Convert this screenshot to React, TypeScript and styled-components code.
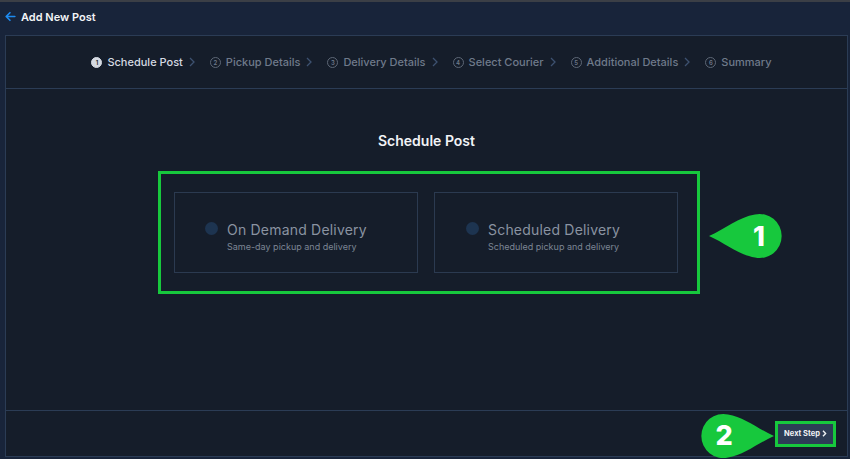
import React from "react";
import styled, { createGlobalStyle } from "styled-components";

const GlobalStyle = createGlobalStyle`
  html, body {
    margin: 0;
    padding: 0;
    background: #18243a;
  }
  body {
    font-family: Inter, "Noto Sans", sans-serif;
  }
`;

const Page = styled.div`
  height: 459px;
  display: flex;
  flex-direction: column;
  background: #18243a;
  overflow: hidden;
`;

const TopStrip = styled.div`
  height: 2px;
  background: #3b3f46;
`;

const Header = styled.div`
  height: 33px;
  box-sizing: border-box;
  padding: 0 0 4px 4px;
  display: flex;
  align-items: center;
  gap: 4px;
  color: #f2f4f7;
  font-size: 11px;
  font-weight: 600;
`;

const Panel = styled.div`
  flex: 1;
  margin: 0 2px 2px 5px;
  display: flex;
  flex-direction: column;
  background: #151d2a;
  border: 1px solid #2b3c55;
`;

const Stepper = styled.div`
  height: 52px;
  display: flex;
  align-items: center;
  justify-content: center;
  padding-left: 10px;
  border-bottom: 1px solid #2b3c55;
`;

const Step = styled.div<{ $active?: boolean }>`
  display: flex;
  align-items: center;
  gap: 5px;
  font-size: 11px;
  font-weight: 500;
  color: ${(p) => (p.$active ? "#d5dae2" : "#6f7a8a")};
`;

const StepNum = styled.span<{ $active?: boolean }>`
  width: 11px;
  height: 11px;
  border-radius: 50%;
  box-sizing: border-box;
  display: flex;
  align-items: center;
  justify-content: center;
  font-size: 6px;
  font-weight: 600;
  border: 1px solid ${(p) => (p.$active ? "#d5dae2" : "#5d6776")};
  background: ${(p) => (p.$active ? "#d5dae2" : "transparent")};
  color: ${(p) => (p.$active ? "#151d2a" : "#6f7a8a")};
`;

const Chevron = styled.span`
  display: flex;
  margin: 0 15px 0 6px;
  color: #3d5170;
`;

const Body = styled.div`
  flex: 1;
  display: flex;
  flex-direction: column;
  align-items: center;
  padding-top: 43px;
`;

const Title = styled.h2`
  margin: 0 0 22px;
  color: #f1f3f6;
  font-size: 14px;
  font-weight: 600;
  line-height: 17px;
`;

const Highlight = styled.div`
  position: relative;
  display: flex;
  gap: 16px;
  padding: 18px 19px 18px 13px;
  border: 3px solid #17c83d;
  margin-left: 5px;
`;

const Card = styled.div<{ $pad: number }>`
  width: 244px;
  height: 81px;
  box-sizing: border-box;
  border: 1px solid #2b3a50;
  display: flex;
  align-items: center;
  gap: 9px;
  padding: 7px 0 0 ${(p) => p.$pad}px;
`;

const Radio = styled.span`
  width: 13px;
  height: 13px;
  border-radius: 50%;
  background: #1d3450;
  flex-shrink: 0;
  margin-top: -15px;
`;

const CardText = styled.div`
  display: flex;
  flex-direction: column;
  gap: 3px;
`;

const CardTitle = styled.div`
  color: #8a93a1;
  font-size: 14px;
  font-weight: 400;
  line-height: 17px;
  letter-spacing: 0.2px;
`;

const CardSub = styled.div`
  color: #7c8594;
  font-size: 9px;
  line-height: 11px;
`;

const Callout1 = styled.div`
  position: absolute;
  left: calc(100% + 12px);
  top: 39px;
  width: 74px;
  height: 46px;
`;

const Callout2 = styled.div`
  position: absolute;
  right: calc(100% + 4px);
  top: -11px;
  width: 74px;
  height: 46px;
`;

const CalloutNum = styled.span<{ $left: number }>`
  position: absolute;
  top: 0;
  left: ${(p) => p.$left}px;
  width: 44px;
  height: 46px;
  display: flex;
  align-items: center;
  justify-content: center;
  color: #ffffff;
  font-size: 27px;
  font-weight: 800;
`;

const Footer = styled.div`
  height: 45px;
  display: flex;
  align-items: center;
  justify-content: flex-end;
  padding-right: 14px;
  border-top: 1px solid #2b3c55;
`;

const NextButton = styled.button`
  position: relative;
  width: 55px;
  height: 20px;
  border: none;
  padding: 0;
  background: #2d3c56;
  color: #f0f2f5;
  font-family: Inter, "Noto Sans", sans-serif;
  font-size: 7.5px;
  font-weight: 700;
  display: flex;
  align-items: center;
  justify-content: center;
  gap: 2px;
  outline: 3px solid #17c83d;
  outline-offset: 0;
`;

const steps = [
  "Schedule Post",
  "Pickup Details",
  "Delivery Details",
  "Select Courier",
  "Additional Details",
  "Summary",
];

function Teardrop({ flip }: { flip?: boolean }) {
  return (
    <svg
      width="74"
      height="46"
      viewBox="0 0 74 46"
      style={flip ? { transform: "scaleX(-1)" } : undefined}
    >
      <path
        d="M0 23 C 16 16, 30 4, 46 1.5 A 22 22 0 1 1 46 44.5 C 30 42, 16 30, 0 23 Z"
        fill="#17c83d"
      />
    </svg>
  );
}

export default function App() {
  return (
    <>
      <GlobalStyle />
      <Page>
        <TopStrip />
        <Header>
          <svg width="13" height="13" viewBox="0 0 24 24" fill="none">
            <path
              d="M20 12H5M11 5l-7 7 7 7"
              stroke="#1e8bf0"
              strokeWidth="3"
              strokeLinecap="round"
              strokeLinejoin="round"
            />
          </svg>
          Add New Post
        </Header>
        <Panel>
          <Stepper>
            {steps.map((s, i) => (
              <React.Fragment key={s}>
                <Step $active={i === 0}>
                  <StepNum $active={i === 0}>{i + 1}</StepNum>
                  {s}
                </Step>
                {i < steps.length - 1 && (
                  <Chevron>
                    <svg width="6" height="10" viewBox="0 0 6 10" fill="none">
                      <path d="M1 1l4 4-4 4" stroke="currentColor" strokeWidth="1.3" />
                    </svg>
                  </Chevron>
                )}
              </React.Fragment>
            ))}
          </Stepper>
          <Body>
            <Title>Schedule Post</Title>
            <Highlight>
              <Card $pad={30}>
                <Radio />
                <CardText>
                  <CardTitle>On Demand Delivery</CardTitle>
                  <CardSub>Same-day pickup and delivery</CardSub>
                </CardText>
              </Card>
              <Card $pad={31}>
                <Radio />
                <CardText>
                  <CardTitle>Scheduled Delivery</CardTitle>
                  <CardSub>Scheduled pickup and delivery</CardSub>
                </CardText>
              </Card>
              <Callout1>
                <Teardrop />
                <CalloutNum $left={28}>1</CalloutNum>
              </Callout1>
            </Highlight>
          </Body>
          <Footer>
            <NextButton>
              Next Step
              <svg width="5" height="7" viewBox="0 0 5 7" fill="none">
                <path d="M1 0.8l2.6 2.7L1 6.2" stroke="#f0f2f5" strokeWidth="1.4" />
              </svg>
              <Callout2>
                <Teardrop flip />
                <CalloutNum $left={2}>2</CalloutNum>
              </Callout2>
            </NextButton>
          </Footer>
        </Panel>
      </Page>
    </>
  );
}
